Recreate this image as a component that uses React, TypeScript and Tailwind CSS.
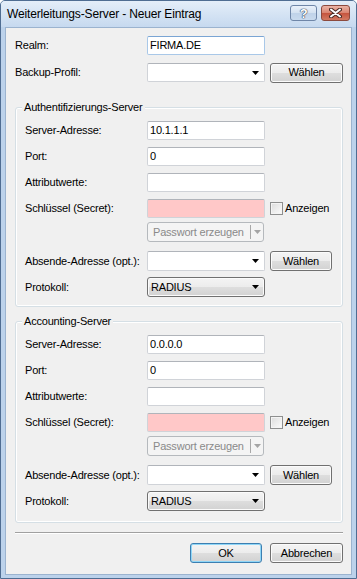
import React from 'react'

// Win7 basic dialog: "Weiterleitungs-Server - Neuer Eintrag"

const Arrow = ({ color = '#000' }: { color?: string }) => (
  <svg width="7" height="4" viewBox="0 0 7 4">
    <path d="M0 0h7L3.5 4z" fill={color} />
  </svg>
)

const TextBox = ({ value = '', pink = false, focus = false }: { value?: string; pink?: boolean; focus?: boolean }) => (
  <div
    className={
      'flex h-[19px] w-[118px] items-center rounded-[2px] border px-[2px] ' +
      (pink ? 'bg-[#ffc8c8] ' : 'bg-white ') +
      (focus ? 'border-[#a9c8e8] border-t-[#7aa5d4]' : 'border-[#d0d3d8] border-t-[#b0b4ba]')
    }
  >
    {value}
  </div>
)

const EditCombo = () => (
  <div className="flex h-[19px] w-[118px] items-center justify-end rounded-[2px] border border-[#d0d3d8] border-t-[#b0b4ba] bg-white pr-[5px]">
    <Arrow />
  </div>
)

const btn =
  'flex items-center justify-center rounded-[3px] border border-[#707070] bg-[linear-gradient(to_bottom,#f4f4f4_0%,#ececec_50%,#dedede_50%,#d2d2d2_100%)] shadow-[inset_0_0_0_1px_#fbfbfb]'

const Button = ({ label, w, def = false }: { label: string; w: string; def?: boolean }) => (
  <div
    className={
      'flex h-[20px] items-center justify-center rounded-[3px] border bg-[linear-gradient(to_bottom,#f4f4f4_0%,#ececec_50%,#dedede_50%,#d2d2d2_100%)] ' +
      w +
      (def ? ' border-[#3c7fb1] shadow-[inset_0_0_0_1px_#8fd6f7]' : ' border-[#707070] shadow-[inset_0_0_0_1px_#fbfbfb]')
    }
  >
    {label}
  </div>
)

const ProtoCombo = () => (
  <div className={btn + ' h-[20px] w-[118px] !justify-between pl-[3px] pr-[5px]'}>
    <span>RADIUS</span>
    <Arrow />
  </div>
)

const PassButton = () => (
  <div className="flex h-[20px] w-[117px] items-center rounded-[3px] border border-[#b5b9bd] bg-[#f4f4f4] text-[#8a8a8a]">
    <span className="flex-1 pl-[5px]">Passwort erzeugen</span>
    <div className="h-[14px] w-px bg-[#a8a8a8]" />
    <div className="flex w-[12px] items-center justify-center">
      <Arrow color="#a4a4a4" />
    </div>
  </div>
)

const Checkbox = () => (
  <div className="h-[13px] w-[13px] border border-[#8e8f8f] bg-[linear-gradient(to_bottom_right,#dcdcdc,#fcfcfc)] shadow-[inset_0_0_0_1px_#f4f4f4]" />
)

const Row = ({ label, lw, children, h = 'h-[19px]' }: { label: string; lw: string; children: React.ReactNode; h?: string }) => (
  <div className={'flex items-center ' + h}>
    <div className={lw}>{label}</div>
    {children}
  </div>
)

const ServerGroup = ({ title, address, pb }: { title: string; address: string; pb: string }) => (
  <div className={'relative rounded-[3px] border border-[#d5dfe5] pl-[9px] pt-[13px] shadow-[inset_0_0_0_1px_#ffffff] ' + pb}>
    <span className="absolute -top-[7px] left-[6px] bg-[#f0f0f0] px-[2px] leading-[13px]">{title}</span>
    <div className="flex flex-col">
      <Row label="Server-Adresse:" lw="w-[122px]">
        <TextBox value={address} />
      </Row>
      <div className="mt-[7px]">
        <Row label="Port:" lw="w-[122px]">
          <TextBox value="0" />
        </Row>
      </div>
      <div className="mt-[7px]">
        <Row label="Attributwerte:" lw="w-[122px]">
          <TextBox />
        </Row>
      </div>
      <div className="mt-[7px]">
        <Row label="Schlüssel (Secret):" lw="w-[122px]">
          <TextBox pink />
          <div className="ml-[5px] flex items-center gap-[2px]">
            <Checkbox />
            <span>Anzeigen</span>
          </div>
        </Row>
      </div>
      <div className="mt-[4px] flex h-[20px] items-center">
        <div className="w-[122px]" />
        <PassButton />
      </div>
      <div className="mt-[9px]">
        <Row label="Absende-Adresse (opt.):" lw="w-[122px]" h="h-[20px]">
          <div className="flex h-[20px] items-center">
            <div className="flex h-[20px] w-[118px] items-center justify-end rounded-[2px] border border-[#d0d3d8] border-t-[#b0b4ba] bg-white pr-[5px]">
              <Arrow />
            </div>
          </div>
          <div className="ml-[5px]">
            <Button label="Wählen" w="w-[62px]" />
          </div>
        </Row>
      </div>
      <div className="mt-[6px]">
        <Row label="Protokoll:" lw="w-[122px]" h="h-[20px]">
          <ProtoCombo />
        </Row>
      </div>
    </div>
  </div>
)

export default function App() {
  return (
    <div className="flex h-[579px] w-[357px] flex-col overflow-hidden rounded-t-[5px] border border-[#4f6d92] bg-[#bcd2eb] font-['Liberation_Sans',Arial,sans-serif] text-[11px] leading-[13px] tracking-[-0.2px] text-black">
      {/* title bar */}
      <div className="relative flex h-[26px] shrink-0 items-center bg-[linear-gradient(to_bottom,#e4eef9,#c6d9ef)] pl-[6px]">
        <span className="text-[12px] tracking-[-0.15px]">Weiterleitungs-Server - Neuer Eintrag</span>
        <div className="absolute right-[6px] top-[4px] flex gap-[4px]">
          <div className="flex h-[16px] w-[27px] items-center justify-center rounded-[3px] border border-[#6f86a8] bg-[linear-gradient(to_bottom,#eaf1fa_0%,#d3e1f1_50%,#bfd2e9_50%,#c9daee_100%)]">
            <span className="text-[13px] font-bold leading-none text-white [text-shadow:0_0_1px_#2d3f5a,0_0_1px_#2d3f5a,0_0_1px_#2d3f5a]">?</span>
          </div>
          <div className="flex h-[16px] w-[29px] items-center justify-center rounded-[3px] border border-[#8c4a3e] bg-[linear-gradient(to_bottom,#ebb4a6_0%,#d9836f_50%,#c5533d_50%,#d27a62_100%)]">
            <svg width="13" height="10" viewBox="0 0 13 10">
              <path d="M2 1.5l9 7M11 1.5l-9 7" stroke="#4a2a24" strokeWidth="4" strokeLinecap="round" />
              <path d="M2 1.5l9 7M11 1.5l-9 7" stroke="#ffffff" strokeWidth="2" strokeLinecap="round" />
            </svg>
          </div>
        </div>
      </div>

      {/* frame + client area */}
      <div className="flex flex-1 flex-col px-[4px] pb-[3px]">
        <div className="flex flex-1 flex-col border border-[#9bb3cf] bg-[#f0f0f0] pl-[9px] pr-[8px] pt-[8px]">
          <Row label="Realm:" lw="w-[132px]">
            <TextBox value="FIRMA.DE" focus />
          </Row>
          <div className="mt-[8px]">
            <Row label="Backup-Profil:" lw="w-[132px]">
              <EditCombo />
              <div className="ml-[5px]">
                <Button label="Wählen" w="w-[73px]" />
              </div>
            </Row>
          </div>

          <div className="mt-[25px]">
            <ServerGroup title="Authentifizierungs-Server" address="10.1.1.1" pb="pb-[9px]" />
          </div>
          <div className="mt-[14px]">
            <ServerGroup title="Accounting-Server" address="0.0.0.0" pb="pb-[11px]" />
          </div>

          <div className="mt-[9px] h-[2px] border-t border-b border-t-[#a0a0a0] border-b-white" />

          <div className="mt-[9px] flex justify-end gap-[8px]">
            <Button label="OK" w="w-[72px]" def />
            <Button label="Abbrechen" w="w-[73px]" />
          </div>
        </div>
      </div>
    </div>
  )
}
